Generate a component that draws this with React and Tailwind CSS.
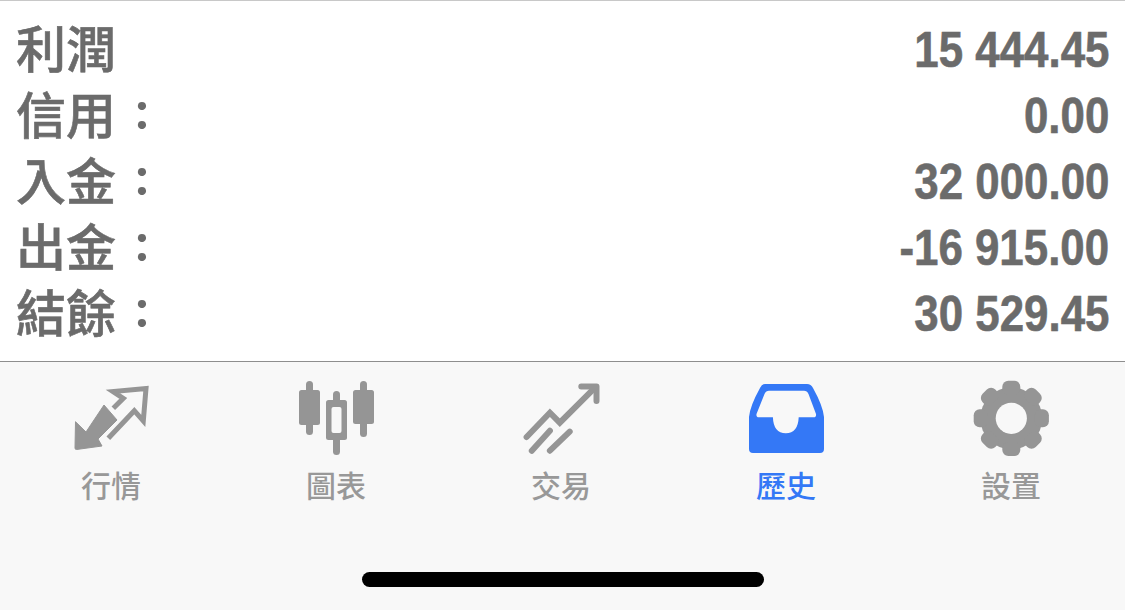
const cjk = { fontFamily: '"Noto Sans CJK TC", sans-serif' };
const num = { fontFamily: '"Liberation Sans", sans-serif' };
const colon = { fontFamily: 'Lato, sans-serif' };

const rows = [
  ['利潤', '', '15 444.45'],
  ['信用', '：', '0.00'],
  ['入金', '：', '32 000.00'],
  ['出金', '：', '-16 915.00'],
  ['結餘', '：', '30 529.45'],
];

function Market() {
  return (
    <svg width="80" height="80" viewBox="71 380 80 80">
      <path d="M75.5 421.7 L86 432 L104 405 L117 420 L98 439 L102 446 L76.5 449.5 Q75 449.5 75 448 Z" fill="#959595" stroke="#959595" strokeWidth="1" strokeLinejoin="round" />
      <path d="M113.3 408.3 L123.3 398.3 L113 391.5 L146 388.5 L143.3 421 L134.3 410.7 L108.3 438.3" fill="none" stroke="#959595" strokeWidth="5" />
    </svg>
  );
}

function Candles() {
  return (
    <svg width="80" height="80" viewBox="296 380 80 80">
      <g fill="#959595">
        <rect x="306" y="381" width="7" height="54" rx="3.5" />
        <rect x="299" y="390" width="21" height="35" rx="2.5" />
        <rect x="333" y="391" width="7" height="64" rx="3.5" />
        <rect x="326" y="400" width="21" height="40" rx="2.5" />
        <rect x="360" y="381" width="7" height="56" rx="3.5" />
        <rect x="353" y="390" width="21" height="34" rx="2.5" />
      </g>
      <rect x="331.5" y="407" width="10" height="26" rx="2" fill="#f8f8f8" />
    </svg>
  );
}

function Trade() {
  return (
    <svg width="80" height="80" viewBox="521 380 80 80">
      <g fill="none" stroke="#959595" strokeWidth="6" strokeLinecap="round" strokeLinejoin="miter">
        <path d="M526.6 437 L549.9 412.7 L559.8 422.7 L594.2 388.3" />
        <path d="M581.3 386.5 L596.5 386.5 L596.5 401" strokeLinejoin="round" />
        <path d="M549.9 430.7 L531.8 450.7" />
        <path d="M569.7 431.7 L549.9 450.7" />
      </g>
    </svg>
  );
}

function Inbox() {
  return (
    <svg width="80" height="80" viewBox="746 380 80 80">
      <path d="M765 384 L807 384 Q811 384 813 388 Q823 406 824 417 L824 449 Q824 453 820 453 L753 453 Q749 453 749 449 L749 417 Q750 406 760 388 Q762 384 765 384 Z" fill="#3478f6" />
      <path d="M769 390.7 L804 390.7 Q807 390.7 808.5 394 L816 414 Q816.5 417.3 813.5 417.3 L798.7 417.3 Q798 433.3 785.8 433.3 Q773.5 433.3 772.9 417.3 L759 417.3 Q756 417.3 756.5 414 L764.5 394 Q766 390.7 769 390.7 Z" fill="#f8f8f8" />
    </svg>
  );
}

function Gear() {
  const angles = [0, 45, 90, 135, 180, 225, 270, 315];
  return (
    <svg width="80" height="80" viewBox="971 380 80 80">
      <circle cx="1011.3" cy="418.3" r="31" fill="#959595" />
      {angles.map((a) => (
        <rect key={a} x="1002.3" y="380.7" width="18" height="14" rx="6" fill="#959595" transform={`rotate(${a} 1011.3 418.3)`} />
      ))}
      <circle cx="1011.3" cy="418.3" r="15.6" fill="#f8f8f8" />
    </svg>
  );
}

const tabs = [
  ['行情', Market, false],
  ['圖表', Candles, false],
  ['交易', Trade, false],
  ['歷史', Inbox, true],
  ['設置', Gear, false],
];

export default function App() {
  return (
    <div className="w-[1125px] h-[610px] overflow-hidden flex flex-col bg-white" style={cjk}>
      <div className="h-[362px] border-t border-b border-t-[#c8c8c8] border-b-[#8e8e8e] pt-[16px] pl-[16px] pr-[16px]">
        {rows.map(([label, mark, value]) => (
          <div key={label} className="h-[66px] flex items-center justify-between text-[#6b6b6b]">
            <span className="flex items-center">
              <span className="text-[50px] leading-[58px] font-medium pb-[8px] [-webkit-text-stroke:0.6px_#6b6b6b]">{label}</span>
              {mark && <span className="w-[52px] text-center text-[54px] leading-[58px] font-bold pb-[14px]" style={colon}>{':'}</span>}
            </span>
            <span className="text-[50px] leading-[66px] font-bold origin-right scale-x-[0.877] [-webkit-text-stroke:0.6px_#6b6b6b]" style={num}>{value}</span>
          </div>
        ))}
      </div>
      <div className="flex-1 flex flex-col bg-[#f8f8f8]">
        <div className="grid grid-cols-5 pt-[18px]">
          {tabs.map(([label, Icon, active]) => (
            <div key={label} className="flex flex-col items-center pr-[3px]">
              <Icon />
              <span className={`text-[30px] leading-[36px] mt-[6px] font-medium ${active ? 'text-[#3478f6]' : 'text-[#989898]'}`}>{label}</span>
            </div>
          ))}
        </div>
        <div className="mt-[70px] mx-auto w-[402px] h-[15px] rounded-full bg-black" />
      </div>
    </div>
  );
}
